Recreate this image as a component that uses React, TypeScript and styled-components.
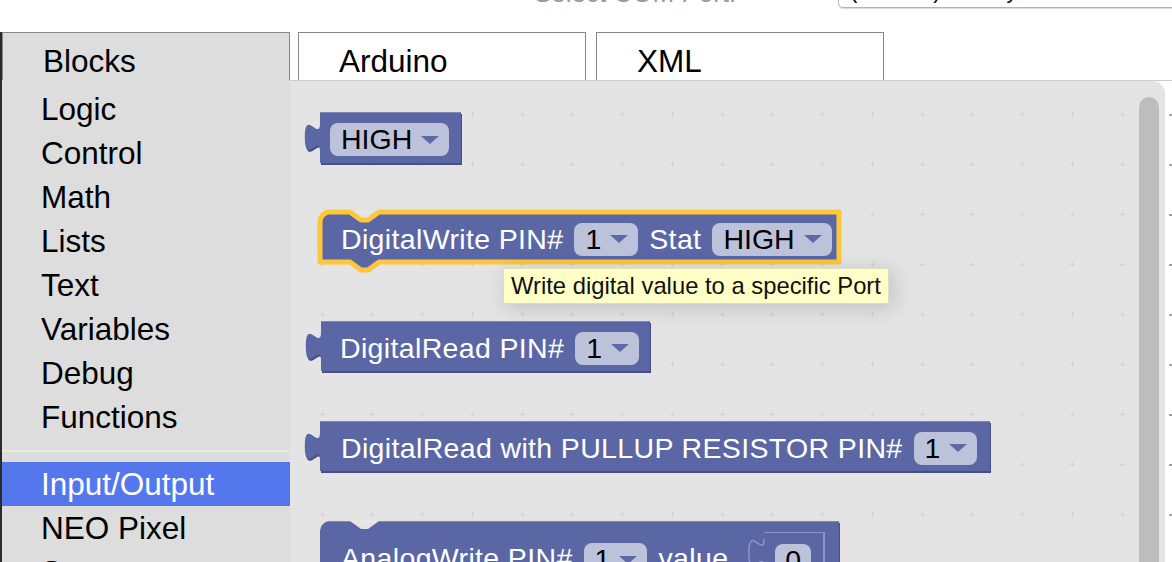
import React from "react";
import styled, { createGlobalStyle } from "styled-components";

const BLOCK = "#5b67a5";
const BLOCK_DARK = "#474f86";
const FIELD = "#bdc2db";
const SELECT = "#fdc73a";

const GlobalStyle = createGlobalStyle`
  html, body { margin: 0; padding: 0; background: #fff; }
  body { font-family: "Liberation Sans", Arial, sans-serif; overflow: hidden; }
  #root { width: 1172px; height: 562px; }
`;

const Page = styled.div`
  width: 1172px;
  height: 562px;
  overflow: hidden;
  display: flex;
  flex-direction: column;
  background: #fff;
`;

const TopBar = styled.div`
  height: 32px;
  flex: none;
  display: flex;
  align-items: flex-start;
  overflow: hidden;
  padding-left: 534px;
`;

const PortLabel = styled.span`
  width: 304px;
  flex: none;
  margin-top: -22.5px;
  font-size: 26px;
  line-height: 30px;
  color: #9a9a9a;
  white-space: nowrap;
  overflow: hidden;
`;

const PortSelect = styled.div`
  flex: 1;
  margin-top: -26px;
  margin-right: -12px;
  height: 34px;
  box-sizing: border-box;
  border: 1px solid #b4b4b4;
  border-radius: 5px;
  box-shadow: 0 1px 1px rgba(0, 0, 0, 0.15);
  padding-left: 11px;
  font-size: 22px;
  line-height: 31px;
  color: #000;
  white-space: nowrap;
`;

const Main = styled.div`
  flex: 1;
  min-height: 0;
  display: flex;
  flex-direction: column;
  border-left: 2px solid #2b2b2b;
`;

const TabRow = styled.div`
  height: 48px;
  flex: none;
  display: flex;
`;

const Tab = styled.div<{ $active?: boolean; $gap?: number }>`
  box-sizing: border-box;
  width: 288px;
  height: 48px;
  margin-left: ${(p) => p.$gap ?? 0}px;
  border: 1px solid #878787;
  border-bottom: none;
  background: ${(p) => (p.$active ? "#dddddd" : "#ffffff")};
  padding: 10px 0 0 40px;
  font-size: 31.5px;
  line-height: 36px;
  color: #000;
`;

const Content = styled.div`
  flex: 1;
  min-height: 0;
  display: flex;
`;

const Toolbox = styled.div`
  width: 288px;
  flex: none;
  background: #dddddd;
  padding-top: 7px;
  display: flex;
  flex-direction: column;
`;

const ToolItem = styled.div<{ $active?: boolean }>`
  height: 44px;
  flex: none;
  line-height: 44px;
  padding-left: 39px;
  font-size: 31.5px;
  color: ${(p) => (p.$active ? "#fff" : "#000")};
  background: ${(p) => (p.$active ? "#5577ee" : "transparent")};
  white-space: nowrap;
`;

const ToolSeparator = styled.div`
  height: 23px;
  flex: none;
  display: flex;
  align-items: center;
  &::after {
    content: "";
    flex: 1;
    height: 2px;
    background: #e9e9e9;
  }
`;

const WorkArea = styled.div`
  flex: 1;
  display: flex;
  border-top: 1px solid #cdcdcd;
`;

const Workspace = styled.div`
  width: 875px;
  flex: none;
  position: relative;
  overflow: hidden;
  background: #e4e4e4;
  border-top-right-radius: 12px;
`;

const Gutter = styled.div`
  flex: 1;
  background-image: repeating-linear-gradient(
    to bottom,
    transparent 0px,
    transparent 33px,
    #a3a3a3 33px,
    #a3a3a3 35px,
    transparent 35px,
    transparent 50px
  );
  background-size: 3px 100%;
  background-position: 4px 0;
  background-repeat: no-repeat;
`;

const GridSvg = styled.svg`
  position: absolute;
  inset: 0;
  width: 100%;
  height: 100%;
`;

const Scrollbar = styled.div`
  position: absolute;
  right: 6px;
  top: 16px;
  bottom: 0;
  width: 20px;
  border-radius: 10px 10px 0 0;
  background: #bdbdbd;
  z-index: 5;
`;

const BlockBox = styled.div<{
  $x: number;
  $y: number;
  $w: number;
  $h: number;
  $pl: number;
  $pt?: number;
}>`
  position: absolute;
  left: ${(p) => p.$x}px;
  top: ${(p) => p.$y}px;
  width: ${(p) => p.$w}px;
  height: ${(p) => p.$h}px;
  box-sizing: border-box;
  display: flex;
  align-items: ${(p) => (p.$pt != null ? "flex-start" : "center")};
  gap: 11px;
  padding: ${(p) => (p.$pt != null ? p.$pt : 4)}px 0 0 ${(p) => p.$pl}px;
  font-size: 28.5px;
  color: #fff;
  white-space: nowrap;
`;

const ShapeSvg = styled.svg`
  position: absolute;
  left: -20px;
  top: -10px;
  overflow: visible;
  pointer-events: none;
`;

const Label = styled.span`
  position: relative;
  line-height: 31px;
  letter-spacing: 0.35px;
  flex: none;
`;

const Field = styled.span`
  position: relative;
  flex: none;
  display: inline-flex;
  align-items: center;
  gap: 9px;
  height: 33px;
  box-sizing: border-box;
  padding: 0 10px 0 11px;
  border-radius: 8px;
  background: ${FIELD};
  color: #000;
  font-size: 28.5px;
`;

const NumberField = styled(Field)`
  padding: 0 10px;
`;

const InnerValue = styled.span`
  position: relative;
  flex: none;
  margin-top: -11px;
  margin-left: 25px;
  padding: 11px 12px 30px 11px;
  background: ${BLOCK};
  border-top: 1px solid #8d96c6;
  border-right: 2px solid #8d96c6;
`;

const InnerTab = styled.svg`
  position: absolute;
  left: -17px;
  top: 6px;
  overflow: visible;
`;

const Tooltip = styled.div`
  position: absolute;
  left: 213px;
  top: 187px;
  z-index: 10;
  background: #ffffc7;
  border: 1px solid #ddddc4;
  box-shadow: 4px 4px 20px 1px rgba(0, 0, 0, 0.15);
  padding: 0 7px;
  font-size: 23.8px;
  line-height: 34px;
  color: #111;
  white-space: nowrap;
`;

const TAB_TOP = 11;

function valuePath(w: number, h: number) {
  return `M0,0 H${w} V${h} H0 V${TAB_TOP + 28.5} c0,-19 -15.2,15.2 -15.2,-14.25 s15.2,4.75 15.2,-14.25 Z`;
}

function statementPath(w: number, h: number, next: boolean) {
  const r = 10;
  const bottom = next ? `H59 l-11,8 h-7 l-11,-8` : "";
  return `M0,${r} A${r},${r} 0 0 1 ${r},0 H30 l11,8 h7 l11,-8 H${w} V${h} ${bottom} H0 Z`;
}

const Arrow = () => (
  <svg width="18" height="8" viewBox="0 0 18 8">
    <path d="M0,0 H18 L9,8 Z" fill="#5e6aa8" />
  </svg>
);

type BlockProps = {
  x: number;
  y: number;
  w: number;
  h: number;
  pl: number;
  pt?: number;
  kind: "value" | "statement";
  next?: boolean;
  selected?: boolean;
  children: React.ReactNode;
};

function Block({ x, y, w, h, pl, pt, kind, next, selected, children }: BlockProps) {
  const d = kind === "value" ? valuePath(w, h) : statementPath(w, h, !!next);
  return (
    <BlockBox $x={x} $y={y} $w={w} $h={h} $pl={pl} $pt={pt}>
      <ShapeSvg width={w + 40} height={h + 20}>
        <g transform="translate(20,10)">
          <path d={d} fill={BLOCK_DARK} transform="translate(1,2)" />
          <path d={d} fill={BLOCK} />
          <path
            d={`M${kind === "statement" ? 10 : 0.5},0.5 H${w - 0.5}`}
            stroke="rgba(255,255,255,0.22)"
            strokeWidth="1"
            fill="none"
          />
          {selected && <path d={d} fill="none" stroke={SELECT} strokeWidth="5" strokeLinejoin="round" />}
        </g>
      </ShapeSvg>
      {children}
    </BlockBox>
  );
}

const Dropdown = ({ value }: { value: string }) => (
  <Field>
    <span>{value}</span>
    <Arrow />
  </Field>
);

const categories = ["Logic", "Control", "Math", "Lists", "Text", "Variables", "Debug", "Functions"];
const hardware = ["Input/Output", "NEO Pixel", "Servo"];

export default function App() {
  return (
    <Page>
      <GlobalStyle />
      <TopBar>
        <PortLabel>Select COM Port:</PortLabel>
        <PortSelect>(Arduino) /dev/tty.usbmodem1421 (Arduino Uno)</PortSelect>
      </TopBar>
      <Main>
        <TabRow>
          <Tab $active>Blocks</Tab>
          <Tab $gap={8}>Arduino</Tab>
          <Tab $gap={10}>XML</Tab>
        </TabRow>
        <Content>
          <Toolbox>
            {categories.map((c) => (
              <ToolItem key={c}>{c}</ToolItem>
            ))}
            <ToolSeparator />
            {hardware.map((c) => (
              <ToolItem key={c} $active={c === "Input/Output"}>
                {c}
              </ToolItem>
            ))}
          </Toolbox>
          <WorkArea>
            <Workspace>
              <GridSvg>
                <defs>
                  <pattern id="grid" width="50" height="50" patternUnits="userSpaceOnUse" x="7" y="8">
                    <rect x="23" y="25" width="5" height="1" fill="#d2d2d2" />
                    <rect x="25" y="23" width="1" height="5" fill="#d2d2d2" />
                  </pattern>
                </defs>
                <rect width="100%" height="100%" fill="url(#grid)" />
              </GridSvg>

              <Block x={30} y={31} w={141} h={51} pl={10} kind="value">
                <Dropdown value="HIGH" />
              </Block>

              <Block x={30} y={131} w={519} h={50} pl={21} kind="statement" next selected>
                <Label>DigitalWrite PIN#</Label>
                <Dropdown value="1" />
                <Label>Stat</Label>
                <Dropdown value="HIGH" />
              </Block>

              <Tooltip>Write digital value to a specific Port</Tooltip>

              <Block x={31} y={240} w={329} h={50} pl={19} kind="value">
                <Label>DigitalRead PIN#</Label>
                <Dropdown value="1" />
              </Block>

              <Block x={30} y={340} w={670} h={50} pl={21} kind="value">
                <Label>DigitalRead with PULLUP RESISTOR PIN#</Label>
                <Dropdown value="1" />
              </Block>

              <Block x={30} y={440} w={519} h={110} pl={21} pt={22} kind="statement" next>
                <Label>AnalogWrite PIN#</Label>
                <Dropdown value="1" />
                <Label>value</Label>
                <InnerValue>
                  <InnerTab width="17" height="30">
                    <path
                      d="M17,28.5 c0,-19 -15.2,15.2 -15.2,-14.25 s15.2,4.75 15.2,-14.25"
                      fill={BLOCK}
                      stroke="#8d96c6"
                      strokeWidth="1.5"
                    />
                  </InnerTab>
                  <NumberField>0</NumberField>
                </InnerValue>
              </Block>

              <Scrollbar />
            </Workspace>
            <Gutter />
          </WorkArea>
        </Content>
      </Main>
    </Page>
  );
}
